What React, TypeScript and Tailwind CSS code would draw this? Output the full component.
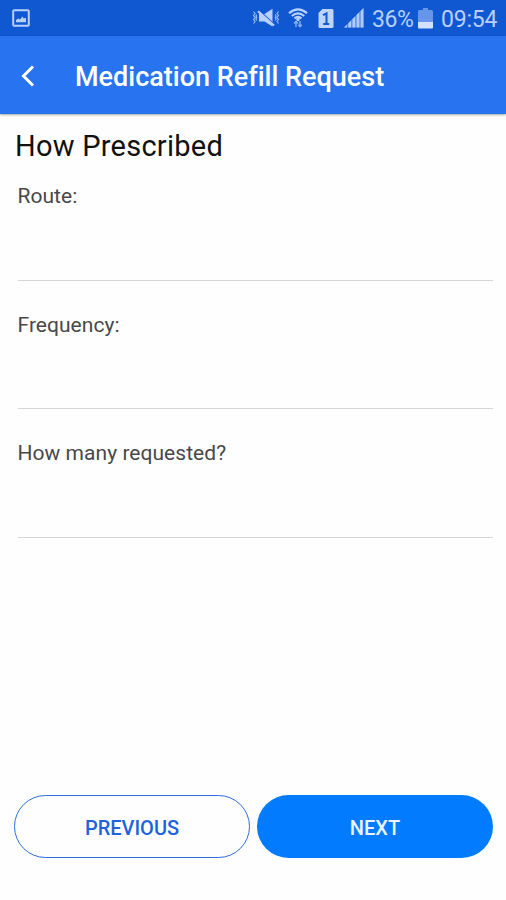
import React from 'react';

interface FieldProps {
  id: string;
  label: string;
}

const PictureIcon = () => (
  <svg width="18" height="18" viewBox="0 0 18 18" fill="none" aria-hidden="true">
    <rect x="1.2" y="1.2" width="15.6" height="15.6" rx="1" stroke="#b9d0fa" strokeWidth="2" />
    <path d="M4 13.2V11l2.2-1.6 1.8 1.2L10.4 7.6l1.4 1.8 2.2-.6v4.4z" fill="#b9d0fa" />
  </svg>
);

const VibrateMuteIcon = () => (
  <svg width="28" height="20" viewBox="0 0 28 20" fill="none" aria-hidden="true">
    <path d="M7 6h5.5L20.5.8v17.6l-8-5H7z" fill="#b9d0fa" />
    <path d="M7.5 2.8l14 12.6" stroke="#1057d2" strokeWidth="1.2" />
    <path d="M6 3.2l16 14.3" stroke="#b9d0fa" strokeWidth="2.2" />
    <path
      d="M1.5 3.5l1.6 2-1.6 2 1.6 2-1.6 2 1.6 2-1.6 2M4.8 6.5l-.9 1.5.9 1.5-.9 1.5.9 1.5M26.5 3.5l-1.6 2 1.6 2-1.6 2 1.6 2-1.6 2 1.6 2M23.2 6.5l.9 1.5-.9 1.5.9 1.5-.9 1.5"
      stroke="#a3c0f7"
      strokeWidth="1.1"
    />
  </svg>
);

const WifiIcon = () => (
  <svg width="20" height="20" viewBox="0 0 20 20" fill="none" aria-hidden="true">
    <path d="M1 5.2Q10-2.4 19 5.2M3.8 8Q10 2.8 16.2 8M6.5 10.4Q10 7.6 13.5 10.4" stroke="#b9d0fa" strokeWidth="2.2" />
    <circle cx="10" cy="11.5" r="1.7" fill="#b9d0fa" />
    <path d="M8 19v-5.5M6 15.5l2-2.2 2 2.2" stroke="#86adf5" strokeWidth="1.4" />
    <path d="M12 13v6M10.3 16.8l1.7 2 1.9-2" stroke="#86adf5" strokeWidth="1.4" />
  </svg>
);

const SimIcon = () => (
  <svg width="16" height="19" viewBox="0 0 16 19" fill="none" aria-hidden="true">
    <path d="M4.5 0H14a1.5 1.5 0 0 1 1.5 1.5v16A1.5 1.5 0 0 1 14 19H2a1.5 1.5 0 0 1-1.5-1.5V4z" fill="#bfd4fb" />
    <path d="M5 6.2l3.5-1.8V15M5.2 15h6" stroke="#1057d2" strokeWidth="2" />
  </svg>
);

const SignalIcon = () => (
  <svg width="20" height="20" viewBox="0 0 20 20" aria-hidden="true">
    <path d="M0 19.5L19.5 0v19.5z" fill="#4d83e6" />
    <path d="M0 19.5l3-3v3zM4.3 15.2l2.9-2.9v7.2H4.3zM8.4 11.1l2.9-2.9v11.3H8.4zM12.5 7l2.9-2.9v15.4h-2.9zM16.6 2.9L19.5 0v19.5h-2.9z" fill="#b0caf9" />
  </svg>
);

const BatteryIcon = () => (
  <svg width="15" height="21" viewBox="0 0 15 21" aria-hidden="true">
    <path d="M5 0h5v2h3.5A1.5 1.5 0 0 1 15 3.5V14H0V3.5A1.5 1.5 0 0 1 1.5 2H5z" fill="#6795e9" />
    <path d="M0 14h15v5.5a1 1 0 0 1-1 1H1a1 1 0 0 1-1-1z" fill="#d3e1fc" />
  </svg>
);

function StatusBar() {
  return (
    <div className="flex h-9 items-center bg-[#1057d2] pr-2 pl-3 text-[#b9d0fa]">
      <PictureIcon />
      <div className="ml-auto flex items-center">
        <VibrateMuteIcon />
        <span className="ml-2"><WifiIcon /></span>
        <span className="ml-2.5"><SimIcon /></span>
        <span className="ml-2.5"><SignalIcon /></span>
        <span className="ml-2 w-[42px] pt-[3px] text-[23px] leading-9 tracking-[-0.4px]">36%</span>
        <span className="ml-1"><BatteryIcon /></span>
        <span className="ml-2 w-[57px] pt-[3px] text-[23px] leading-9 tracking-[-0.2px]">09:54</span>
      </div>
    </div>
  );
}

function Field({ id, label }: FieldProps) {
  return (
    <div className="flex h-[128.5px] flex-col border-b border-[#d6d6d6]">
      <label htmlFor={id} className="pt-[30px] text-[21px] leading-7 tracking-[0.04px] text-[#484848]">
        {label}
      </label>
      <input id={id} type="text" className="w-full flex-1 bg-transparent text-xl outline-none" />
    </div>
  );
}

export default function App() {
  return (
    <div className="flex h-[900px] w-[506px] flex-col bg-[#fefefe] font-['Roboto',sans-serif]">
      <StatusBar />
      <header className="flex h-[78px] shrink-0 items-center bg-[#2874f0] pl-[21px] shadow-[0_1px_2px_rgba(0,0,0,0.35)]">
        <button aria-label="Back">
          <svg width="14" height="22" viewBox="0 0 14 22" fill="none" className="mt-0.5">
            <path d="M12 1.5L2.5 11l9.5 9.5" stroke="#fff" strokeWidth="3" />
          </svg>
        </button>
        <h1 className="ml-10 pt-[3px] text-[27px] leading-8 font-medium text-white [font-variant-ligatures:none]">
          Medication Refill Request
        </h1>
      </header>

      <main className="flex flex-1 flex-col pt-3.5 pr-[13px] pl-[15px]">
        <h2 className="h-6 text-[29px] leading-9 tracking-[0.25px] text-[#111]">How Prescribed</h2>
        <form className="pl-[2.5px]">
          <Field id="route" label="Route:" />
          <Field id="frequency" label="Frequency:" />
          <Field id="quantity" label="How many requested?" />
        </form>
        <div className="mt-auto mb-[42px] -ml-px grid grid-cols-2 gap-[7px]">
          <button className="h-[63px] rounded-full border border-[#2f6be0] pt-0.5 text-xl font-medium text-[#1f63dc]">
            PREVIOUS
          </button>
          <button className="h-[63px] rounded-full bg-[#027bff] pt-0.5 text-xl font-medium text-[#eaf3ff]">NEXT</button>
        </div>
      </main>
    </div>
  );
}
